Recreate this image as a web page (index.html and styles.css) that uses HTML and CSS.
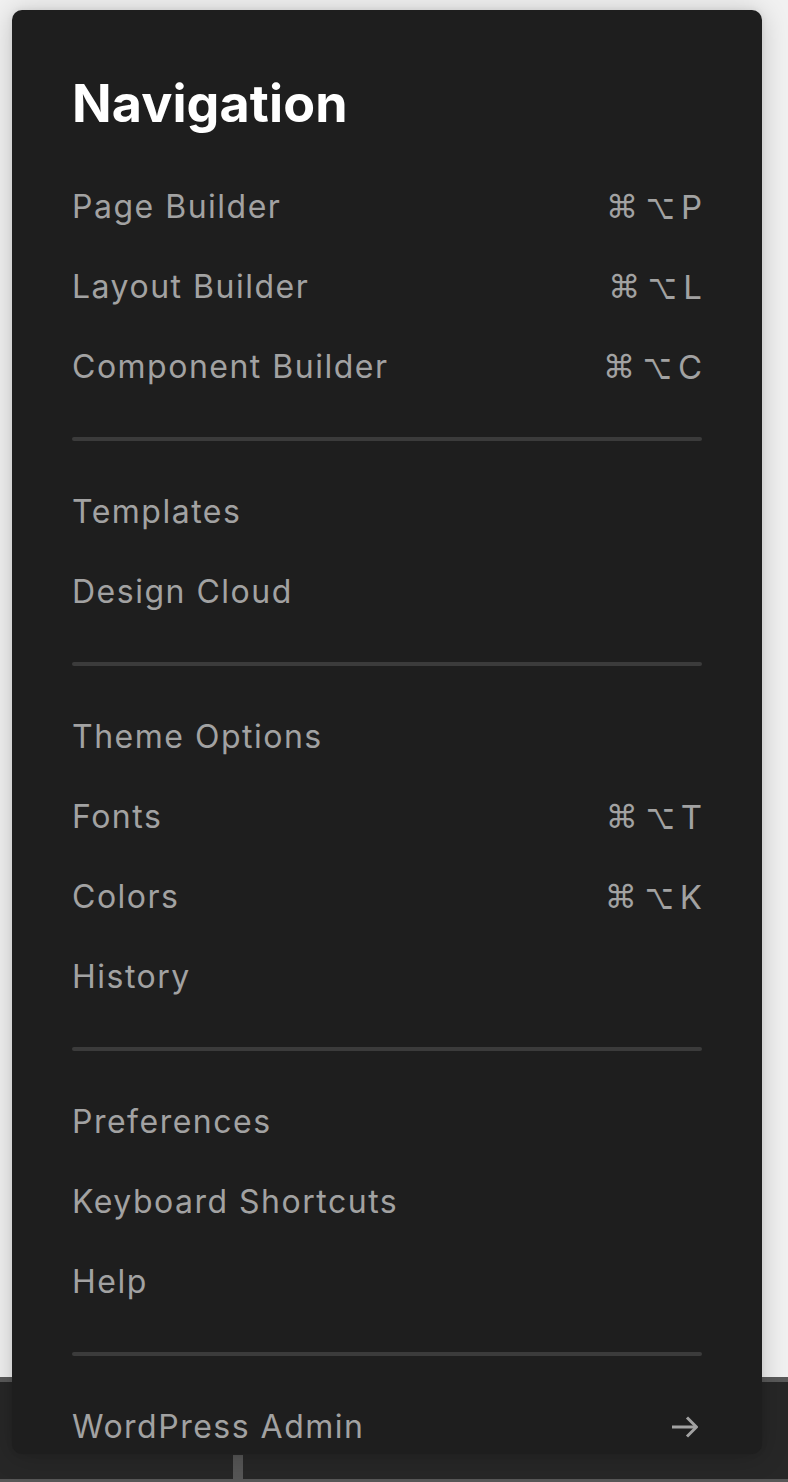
FILE: index.html
```html
<!DOCTYPE html>
<html lang="en">
<head>
<meta charset="utf-8">
<title>Navigation</title>
<link rel="stylesheet" href="styles.css">
</head>
<body>
<div class="app">
  <div class="canvas"></div>
  <div class="toolbar"><span class="toolbar-sep"></span></div>
</div>

<nav class="panel">
  <h1 class="panel-title">Navigation</h1>

  <ul class="group">
    <li class="item"><span class="label">Page Builder</span><span class="keys"><span class="sym">⌘</span><span class="sym opt">⌥</span><span class="key">P</span></span></li>
    <li class="item"><span class="label">Layout Builder</span><span class="keys"><span class="sym">⌘</span><span class="sym opt">⌥</span><span class="key">L</span></span></li>
    <li class="item"><span class="label">Component Builder</span><span class="keys"><span class="sym">⌘</span><span class="sym opt">⌥</span><span class="key">C</span></span></li>
  </ul>
  <hr class="rule">
  <ul class="group">
    <li class="item"><span class="label">Templates</span></li>
    <li class="item"><span class="label">Design Cloud</span></li>
  </ul>
  <hr class="rule">
  <ul class="group">
    <li class="item"><span class="label">Theme Options</span></li>
    <li class="item"><span class="label">Fonts</span><span class="keys"><span class="sym">⌘</span><span class="sym opt">⌥</span><span class="key">T</span></span></li>
    <li class="item"><span class="label">Colors</span><span class="keys"><span class="sym">⌘</span><span class="sym opt">⌥</span><span class="key">K</span></span></li>
    <li class="item"><span class="label">History</span></li>
  </ul>
  <hr class="rule">
  <ul class="group">
    <li class="item"><span class="label">Preferences</span></li>
    <li class="item"><span class="label">Keyboard Shortcuts</span></li>
    <li class="item"><span class="label">Help</span></li>
  </ul>
  <hr class="rule">
  <ul class="group">
    <li class="item"><span class="label">WordPress Admin</span>
      <svg class="arrow" width="26" height="22" viewBox="0 0 26 22" fill="none" stroke="currentColor" stroke-width="3" stroke-linecap="butt" stroke-linejoin="miter"><path d="M0 11 H23"/><path d="M15 1.5 L24.5 11 L15 20.5"/></svg>
    </li>
  </ul>
</nav>
</body>
</html>
```

FILE: styles.css
```css
* { box-sizing: border-box; }

html, body {
  margin: 0;
  padding: 0;
}

body {
  background: #f1f1f1;
  font-family: Inter, "Noto Sans", "Liberation Sans", sans-serif;
  width: 788px;
  height: 1482px;
  overflow: hidden;
  position: relative;
}

.app {
  display: flex;
  flex-direction: column;
  height: 1482px;
}

.canvas {
  height: 1377px;
  background: #f1f1f1;
}

.toolbar {
  flex: 1;
  background: #272727;
  border-top: 5px solid #5a5a5a;
  border-bottom: 3px solid #575757;
  display: flex;
  align-items: flex-end;
  padding-left: 233px;
}

.toolbar-sep {
  width: 10px;
  height: 24px;
  background: #565656;
}

.panel {
  position: absolute;
  top: 10px;
  left: 12px;
  width: 750px;
  height: 1444px;
  background: #1e1e1e;
  border-radius: 10px;
  box-shadow: 0 2px 28px rgba(0, 0, 0, 0.2), 0 0 6px rgba(0, 0, 0, 0.08);
  padding: 62px 60px 0;
  overflow: hidden;
}

.panel-title {
  margin: 0 0 31px;
  font-size: 52px;
  line-height: 64px;
  font-weight: 700;
  color: #ffffff;
  letter-spacing: 0.1px;
}

.group {
  list-style: none;
  margin: 0;
  padding: 0;
}

.item {
  height: 80px;
  display: flex;
  align-items: center;
  justify-content: space-between;
  color: #a2a2a2;
  font-size: 32px;
  line-height: 80px;
}

.label {
  letter-spacing: 1.5px;
}

.keys {
  display: flex;
  align-items: center;
  gap: 8px;
}

.sym {
  font-family: "DejaVu Sans", sans-serif;
  font-size: 32px;
}

.opt {
  display: inline-block;
  font-size: 35px;
  width: 27px;
  white-space: nowrap;
  transform: scaleX(0.7);
  transform-origin: left center;
}

.key {
  font-size: 33px;
}

.arrow {
  color: #a2a2a2;
  margin-right: 4px;
}

.rule {
  border: 0;
  height: 4px;
  margin: 30px 0 31px;
  background: #3b3b3b;
  border-radius: 2px;
}
```
